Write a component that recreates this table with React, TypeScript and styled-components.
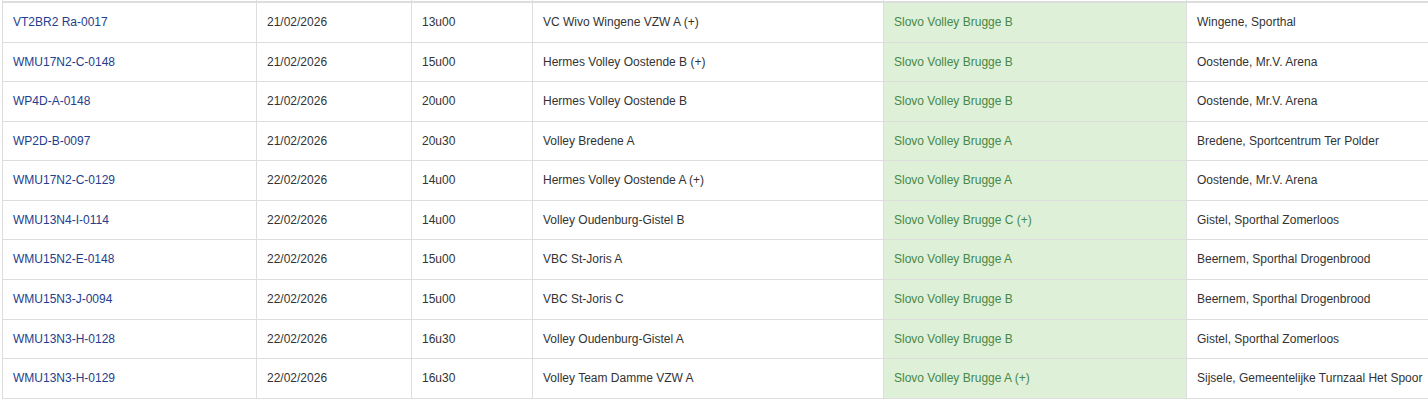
import React from "react";
import styled, { createGlobalStyle } from "styled-components";

const GlobalStyle = createGlobalStyle`
  html, body {
    margin: 0;
    padding: 0;
    background: #fff;
    overflow: hidden;
  }
  body {
    font-family: "Liberation Sans", Arial, sans-serif;
    font-size: 12px;
    color: #333;
  }
`;

const StyledWrapper = styled.div`
  width: 1428px;
  overflow: hidden;
  padding-left: 2px;
  box-sizing: border-box;
`;

const StyledTable = styled.table`
  border-collapse: collapse;
  table-layout: fixed;
  width: 1600px;
`;

const HeadCell = styled.th`
  height: 1px;
  padding: 0;
  border-left: 1px solid #ddd;
  border-right: 1px solid #ddd;
  border-bottom: 2px solid #ddd;
`;

const Cell = styled.td<{ $home?: boolean }>`
  padding: 11px 10px 11px 10px;
  line-height: 16.56px;
  text-align: left;
  white-space: nowrap;
  overflow: hidden;
  border: 1px solid #ddd;
  background: ${(p) => (p.$home ? "#dff0d8" : "#fff")};
  color: ${(p) => (p.$home ? "#468847" : "#333")};
`;

const MatchLink = styled.a`
  color: #23408e;
  text-decoration: none;
`;

interface Match {
  code: string;
  date: string;
  time: string;
  home: string;
  away: string;
  venue: string;
}

const matches: Match[] = [
  { code: "VT2BR2 Ra-0017", date: "21/02/2026", time: "13u00", home: "VC Wivo Wingene VZW A (+)", away: "Slovo Volley Brugge B", venue: "Wingene, Sporthal" },
  { code: "WMU17N2-C-0148", date: "21/02/2026", time: "15u00", home: "Hermes Volley Oostende B (+)", away: "Slovo Volley Brugge B", venue: "Oostende, Mr.V. Arena" },
  { code: "WP4D-A-0148", date: "21/02/2026", time: "20u00", home: "Hermes Volley Oostende B", away: "Slovo Volley Brugge B", venue: "Oostende, Mr.V. Arena" },
  { code: "WP2D-B-0097", date: "21/02/2026", time: "20u30", home: "Volley Bredene A", away: "Slovo Volley Brugge A", venue: "Bredene, Sportcentrum Ter Polder" },
  { code: "WMU17N2-C-0129", date: "22/02/2026", time: "14u00", home: "Hermes Volley Oostende A (+)", away: "Slovo Volley Brugge A", venue: "Oostende, Mr.V. Arena" },
  { code: "WMU13N4-I-0114", date: "22/02/2026", time: "14u00", home: "Volley Oudenburg-Gistel B", away: "Slovo Volley Brugge C (+)", venue: "Gistel, Sporthal Zomerloos" },
  { code: "WMU15N2-E-0148", date: "22/02/2026", time: "15u00", home: "VBC St-Joris A", away: "Slovo Volley Brugge A", venue: "Beernem, Sporthal Drogenbrood" },
  { code: "WMU15N3-J-0094", date: "22/02/2026", time: "15u00", home: "VBC St-Joris C", away: "Slovo Volley Brugge B", venue: "Beernem, Sporthal Drogenbrood" },
  { code: "WMU13N3-H-0128", date: "22/02/2026", time: "16u30", home: "Volley Oudenburg-Gistel A", away: "Slovo Volley Brugge B", venue: "Gistel, Sporthal Zomerloos" },
  { code: "WMU13N3-H-0129", date: "22/02/2026", time: "16u30", home: "Volley Team Damme VZW A", away: "Slovo Volley Brugge A (+)", venue: "Sijsele, Gemeentelijke Turnzaal Het Spoor" },
];

const widths = [254, 155, 121, 351, 303, 416];

const App = () => {
  return (
    <StyledWrapper>
      <GlobalStyle />
      <StyledTable>
        <colgroup>
          {widths.map((w, i) => (
            <col key={i} style={{ width: w }} />
          ))}
        </colgroup>
        <thead>
          <tr>
            {widths.map((_, i) => (
              <HeadCell key={i} />
            ))}
          </tr>
        </thead>
        <tbody>
          {matches.map((m) => (
            <tr key={m.code}>
              <Cell>
                <MatchLink href="#">{m.code}</MatchLink>
              </Cell>
              <Cell>{m.date}</Cell>
              <Cell>{m.time}</Cell>
              <Cell>{m.home}</Cell>
              <Cell $home>{m.away}</Cell>
              <Cell>{m.venue}</Cell>
            </tr>
          ))}
        </tbody>
      </StyledTable>
    </StyledWrapper>
  );
};

export default App;
